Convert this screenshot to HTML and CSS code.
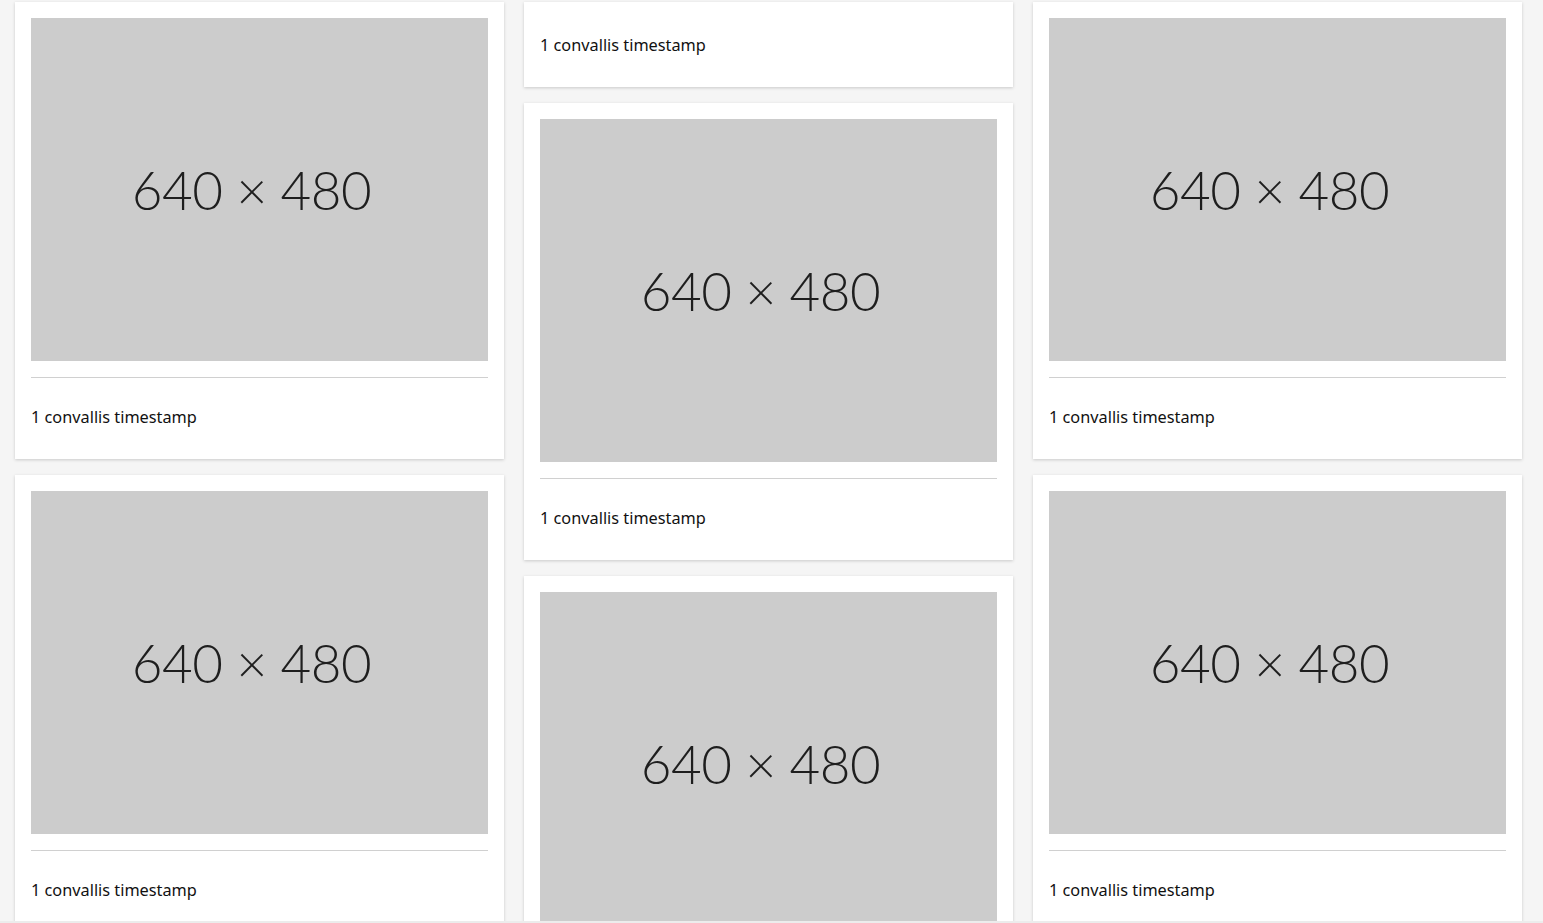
FILE: index.html
```html
<!DOCTYPE html>
<html>
<head>
<meta charset="utf-8">
<link rel="stylesheet" href="styles.css">
</head>
<body>
<div class="masonry">
  <div class="col">
    <div class="card">
      <div class="ph"><span>640 × 480</span></div>
      <div class="divider"></div>
      <div class="caption">1 convallis timestamp</div>
    </div>
    <div class="card">
      <div class="ph"><span>640 × 480</span></div>
      <div class="divider"></div>
      <div class="caption">1 convallis timestamp</div>
    </div>
  </div>
  <div class="col">
    <div class="card text-only">
      <div class="caption">1 convallis timestamp</div>
    </div>
    <div class="card">
      <div class="ph"><span>640 × 480</span></div>
      <div class="divider"></div>
      <div class="caption">1 convallis timestamp</div>
    </div>
    <div class="card">
      <div class="ph"><span>640 × 480</span></div>
      <div class="divider"></div>
      <div class="caption">1 convallis timestamp</div>
    </div>
  </div>
  <div class="col">
    <div class="card">
      <div class="ph"><span>640 × 480</span></div>
      <div class="divider"></div>
      <div class="caption">1 convallis timestamp</div>
    </div>
    <div class="card">
      <div class="ph"><span>640 × 480</span></div>
      <div class="divider"></div>
      <div class="caption">1 convallis timestamp</div>
    </div>
  </div>
</div>
</body>
</html>
```
FILE: styles.css
```css
html {
  margin: 0;
  padding: 0;
  background: #ececec;
  overflow: hidden;
}
body {
  margin: 0;
  height: 921px;
  box-sizing: border-box;
  overflow: hidden;
  background: #f5f5f5;
  padding: 2px 0 0 15px;
  font-family: "Noto Sans", "Open Sans", sans-serif;
}
.masonry {
  display: flex;
  gap: 20px;
  align-items: flex-start;
}
.col {
  width: 489px;
  display: flex;
  flex-direction: column;
  gap: 16px;
}
.card {
  background: #fff;
  box-shadow: 0 1px 3px rgba(0, 0, 0, 0.18);
  padding: 16px 16px 0;
}
.card.text-only {
  padding-top: 4px;
}
.ph {
  height: 343px;
  background: #cccccc;
  display: flex;
  align-items: center;
  justify-content: center;
}
.ph span {
  font-family: "Lato", sans-serif;
  font-weight: 300;
  font-size: 53px;
  letter-spacing: -0.5px;
  word-spacing: 0;
  color: #1e1e1e;
  margin-left: -16px;
}
.divider {
  margin-top: 16px;
  height: 1px;
  background: #d0d0d0;
}
.caption {
  padding: 27px 0 30px;
  line-height: 24px;
  font-size: 16.3px;
  color: #111;
}
```
